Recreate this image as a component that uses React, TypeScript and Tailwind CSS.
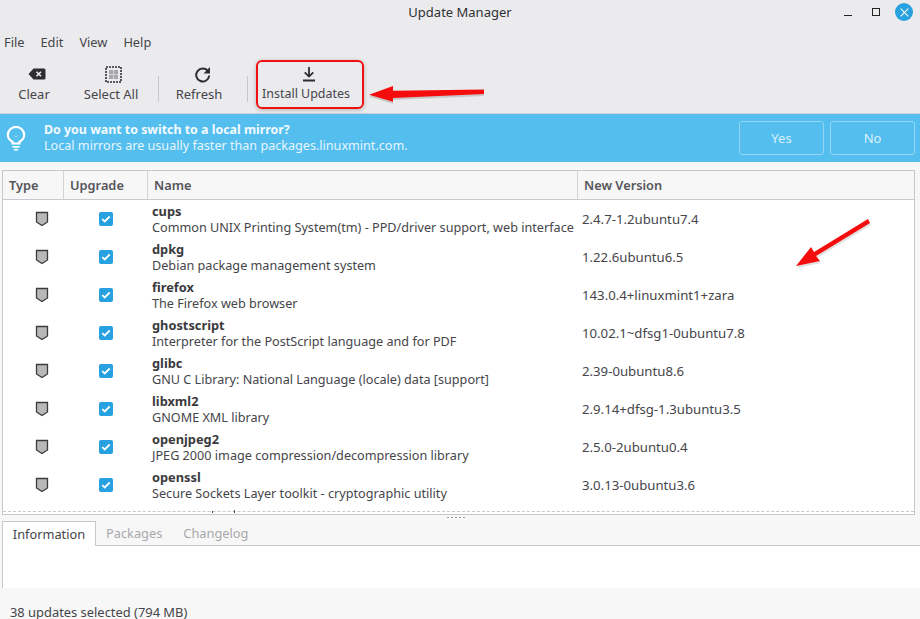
import React from 'react';

const FONT = "font-['Noto_Sans','Open_Sans',sans-serif]";

const updates = [
  { name: 'cups', desc: 'Common UNIX Printing System(tm) - PPD/driver support, web interface', version: '2.4.7-1.2ubuntu7.4' },
  { name: 'dpkg', desc: 'Debian package management system', version: '1.22.6ubuntu6.5' },
  { name: 'firefox', desc: 'The Firefox web browser', version: '143.0.4+linuxmint1+zara' },
  { name: 'ghostscript', desc: 'Interpreter for the PostScript language and for PDF', version: '10.02.1~dfsg1-0ubuntu7.8' },
  { name: 'glibc', desc: 'GNU C Library: National Language (locale) data [support]', version: '2.39-0ubuntu8.6' },
  { name: 'libxml2', desc: 'GNOME XML library', version: '2.9.14+dfsg-1.3ubuntu3.5' },
  { name: 'openjpeg2', desc: 'JPEG 2000 image compression/decompression library', version: '2.5.0-2ubuntu0.4' },
  { name: 'openssl', desc: 'Secure Sockets Layer toolkit - cryptographic utility', version: '3.0.13-0ubuntu3.6' },
];

function ShieldIcon() {
  return (
    <svg width="14" height="16" viewBox="0 0 14 16">
      <path d="M1.500 1.500h11v9.500L7 14.500 1.500 11z" fill="#b8b8b8" stroke="#3c3c3c" strokeWidth="1.300" />
    </svg>
  );
}

function CheckBox() {
  return (
    <div className="w-[14px] h-[14px] rounded-[2px] bg-[#27a1e0] flex items-center justify-center">
      <svg width="10" height="8" viewBox="0 0 10 8">
        <path d="M1.300 4.200l2.400 2.300 5-5" fill="none" stroke="#fff" strokeWidth="1.800" />
      </svg>
    </div>
  );
}

function ToolButton({ icon, label, className = '', labelClass = 'text-[13px]' }: { icon: React.ReactNode; label: string; className?: string; labelClass?: string }) {
  return (
    <div className={`flex flex-col items-center ${className}`}>
      <div className="h-[20px] flex items-center justify-center">{icon}</div>
      <span className={`mt-[1px] leading-[18px] text-[#45454a] ${labelClass}`}>{label}</span>
    </div>
  );
}

function HeaderCell({ label, className = '' }: { label: string; className?: string }) {
  return (
    <div className={`h-full flex items-center pl-[6px] pt-[1px] text-[12.8px] font-semibold text-[#55555a] ${className}`}>
      {label}
    </div>
  );
}

function App() {
  return (
    <div className={`relative w-[920px] h-[619px] overflow-hidden bg-[#f7f7f7] ${FONT}`}>
      {/* Title bar */}
      <div className="relative h-[26px] bg-[#ebebed] flex items-center justify-center">
        <span className="text-[13px] text-[#303034]">Update Manager</span>
        <div className="absolute right-[7px] top-[3px] flex items-center">
          <div className="w-[8px] h-[1px] bg-[#222] mt-[6px] mr-[20px]" />
          <div className="w-[8px] h-[8px] border border-[#222] mr-[15px]" />
          <div className="w-[18px] h-[18px] rounded-full bg-[#27a1e0] flex items-center justify-center">
            <svg width="9" height="9" viewBox="0 0 9 9">
              <path d="M.7.7l7.600 7.600M8.300.7L.7 8.300" stroke="#fff" strokeWidth="1.100" />
            </svg>
          </div>
        </div>
      </div>

      {/* Menu bar */}
      <div className="h-[30px] bg-[#ebebed] flex items-center pl-[4px] pt-[4px] gap-[16px] text-[12.8px] text-[#45454a]">
        <span>File</span>
        <span>Edit</span>
        <span>View</span>
        <span>Help</span>
      </div>

      {/* Toolbar */}
      <div className="h-[58px] bg-[#ebebed] border-b border-[#d0d0d4] flex items-start pt-[8px]">
        <ToolButton
          className="w-[68px]"
          label="Clear"
          icon={
            <svg className="translate-x-[3px]" width="18" height="14" viewBox="0 0 18 14">
              <path d="M5.500 1.500H16A1.500 1.500 0 0 1 17.500 3v8a1.500 1.500 0 0 1-1.500 1.500H5.500L.5 7z" fill="#2e2e32" />
              <path d="M8.500 4.700l4.500 4.600M13 4.700L8.500 9.300" stroke="#ebebed" strokeWidth="1.600" />
            </svg>
          }
        />
        <ToolButton
          className="w-[86px]"
          label="Select All"
          icon={
            <svg className="translate-x-[2px]" width="17" height="17" viewBox="0 0 17 17">
              <rect x="1" y="1" width="15" height="15" fill="none" stroke="#2e2e32" strokeWidth="1.600" strokeDasharray="2 1" />
              <rect x="4" y="4" width="9" height="9" fill="#a8a8ac" />
              <path d="M8.500 4v9M4 8.500h9" stroke="#d4d4d8" strokeWidth="1" />
            </svg>
          }
        />
        <div className="w-px h-[26px] bg-[#c8c8cc] mt-[12px] ml-[4px]" />
        <ToolButton
          className="w-[80px]"
          label="Refresh"
          icon={
            <svg className="translate-x-[3px]" width="17" height="17" viewBox="0 0 17 17">
              <path d="M14 5.200A6.500 6.500 0 1 0 15.200 9.500" fill="none" stroke="#2e2e32" strokeWidth="2" />
              <path d="M16 1v6.500H9.500z" fill="#2e2e32" />
            </svg>
          }
        />
        <div className="w-px h-[26px] bg-[#c8c8cc] mt-[12px] ml-[8px]" />
        <ToolButton
          className="w-[116px]"
          label="Install Updates"
          labelClass="text-[12.45px]"
          icon={
            <svg className="translate-x-[3px]" width="14" height="16" viewBox="0 0 14 16">
              <path d="M7 1v9.500M2.700 6.300L7 10.600l4.300-4.300M1 14.500h12" fill="none" stroke="#2e2e32" strokeWidth="1.800" />
            </svg>
          }
        />
      </div>

      {/* Info bar */}
      <div className="h-[48px] bg-[#54beee] flex items-center">
        <div className="w-[44px] pl-[6px] flex items-center">
          <svg width="20" height="26" viewBox="0 0 20 26">
            <path d="M6.500 18.500v-1.800C3.500 15.200 1.800 12.800 1.800 10a8.200 8.200 0 0 1 16.400 0c0 2.800-1.700 5.200-4.700 6.700v1.800z" fill="none" stroke="#fff" strokeWidth="2.200" />
            <path d="M6.500 21h7v1.800h-7zM8 24h4v1.500H8z" fill="#fff" />
            <path d="M8 10.500l2 1.500 2-1.500" fill="none" stroke="#a8e0f7" strokeWidth="1" />
          </svg>
        </div>
        <div className="flex-1 flex flex-col leading-[16px] text-[#e6f6fd]">
          <span className="text-[12.4px] font-bold text-[#f2fafe]">Do you want to switch to a local mirror?</span>
          <span className="text-[12.6px]">Local mirrors are usually faster than packages.linuxmint.com.</span>
        </div>
        <div className="flex gap-[6px] pr-[5px]">
          <div className="w-[85px] h-[34px] pt-[1px] rounded-[3px] border border-[#92d6f4] flex items-center justify-center text-[13px] text-[#d8f2fc]">Yes</div>
          <div className="w-[85px] h-[34px] pt-[1px] rounded-[3px] border border-[#92d6f4] flex items-center justify-center text-[13px] text-[#d8f2fc]">No</div>
        </div>
      </div>

      {/* Package list */}
      <div className="relative mt-[8px] ml-[2px] mr-[5px] h-[344px] border border-b-0 border-[#c8c8cc] bg-white overflow-hidden">
        <div className="h-[29px] bg-[#f7f7f7] border-b border-[#c8c8d0] grid grid-cols-[61px_84px_430px_1fr] items-center">
          <HeaderCell label="Type" className="border-r border-[#d4d4d8]" />
          <HeaderCell label="Upgrade" className="border-r border-[#d4d4d8]" />
          <HeaderCell label="Name" className="border-r border-[#d4d4d8]" />
          <HeaderCell label="New Version" />
        </div>
        {updates.map((u) => (
          <div key={u.name} className="h-[38px] grid grid-cols-[61px_84px_430px_1fr] items-center text-[#45454a]">
            <div className="flex justify-center pl-[16px]"><ShieldIcon /></div>
            <div className="flex justify-center"><CheckBox /></div>
            <div className="pl-[4px] flex flex-col whitespace-nowrap">
              <span className="text-[12.8px] leading-[16px] font-bold text-[#3a3a3e]">{u.name}</span>
              <span className="text-[12.65px] leading-[17px]">{u.desc}</span>
            </div>
            <div className="pl-[4px] pt-[1px] text-[13.2px]">{u.version}</div>
          </div>
        ))}
        <div className="mt-[7px] border-t border-dashed border-[#c8c8cc]" />
        <div className="absolute left-[209px] bottom-[1px] w-px h-[2px] bg-[#45454a]" />
        <div className="absolute left-[231px] bottom-[1px] w-px h-[3px] bg-[#45454a]" />
      </div>

      {/* Pane divider */}
      <div className="relative h-[8px] ml-[2px] mr-[5px] border-t border-[#c8c8cc]">
        <div className="absolute left-[445px] top-[2px] flex gap-[2px]">
          {[0, 1, 2, 3, 4].map((i) => (
            <div key={i} className="w-[2px] h-[1px] bg-[#9a9a9e]" />
          ))}
        </div>
      </div>

      {/* Tabs */}
      <div className="ml-[2px] h-[24px] flex items-end text-[12.8px] border-b border-[#c8c8cc]">
        <div className="h-[25px] -mb-px w-[94px] pt-[1px] border border-b-0 border-[#c8c8cc] bg-white flex items-center justify-center text-[#45454a]">Information</div>
        <div className="ml-[10px] h-[24px] pt-[1px] flex items-center text-[#a8a8ac]">Packages</div>
        <div className="ml-[21px] h-[24px] pt-[1px] flex items-center text-[#a8a8ac]">Changelog</div>
      </div>
      <div className="ml-[2px] h-[42px] bg-white border-l border-[#c8c8cc]" />

      {/* Status bar */}
      <div className="h-[31px] pl-[10px] pt-[15px] text-[12.9px] leading-[18px] text-[#45454a]">38 updates selected (794 MB)</div>

      {/* Screenshot annotations */}
      <div className="absolute left-[256px] top-[60px] w-[108px] h-[49px] rounded-[6px] border-2 border-[#f01010] shadow-[0_1px_4px_rgba(0,0,0,0.25)]" />
      <svg className="absolute left-[360px] top-[80px]" width="130" height="28" viewBox="0 0 130 28">
        <path d="M9 14.700L33 6v4.700l91-1.200v4.500l-91 4v3.700z" fill="#000" opacity="0.15" transform="translate(0 2)" />
        <path d="M9 14.700L33 6v4.700l91-1.200v4.500l-91 4v3.700z" fill="#f50d0d" />
      </svg>
      <svg className="absolute left-[790px] top-[212px]" width="90" height="60" viewBox="0 0 90 60">
        <path d="M80 11L26 44l4 5-24 5 15-19 3 5L78 7z" fill="#000" opacity="0.12" transform="translate(1 2)" />
        <path d="M80 11L26 44l4 5-24 5 15-19 3 5L78 7z" fill="#f50d0d" />
      </svg>
    </div>
  );
}

export default App;
